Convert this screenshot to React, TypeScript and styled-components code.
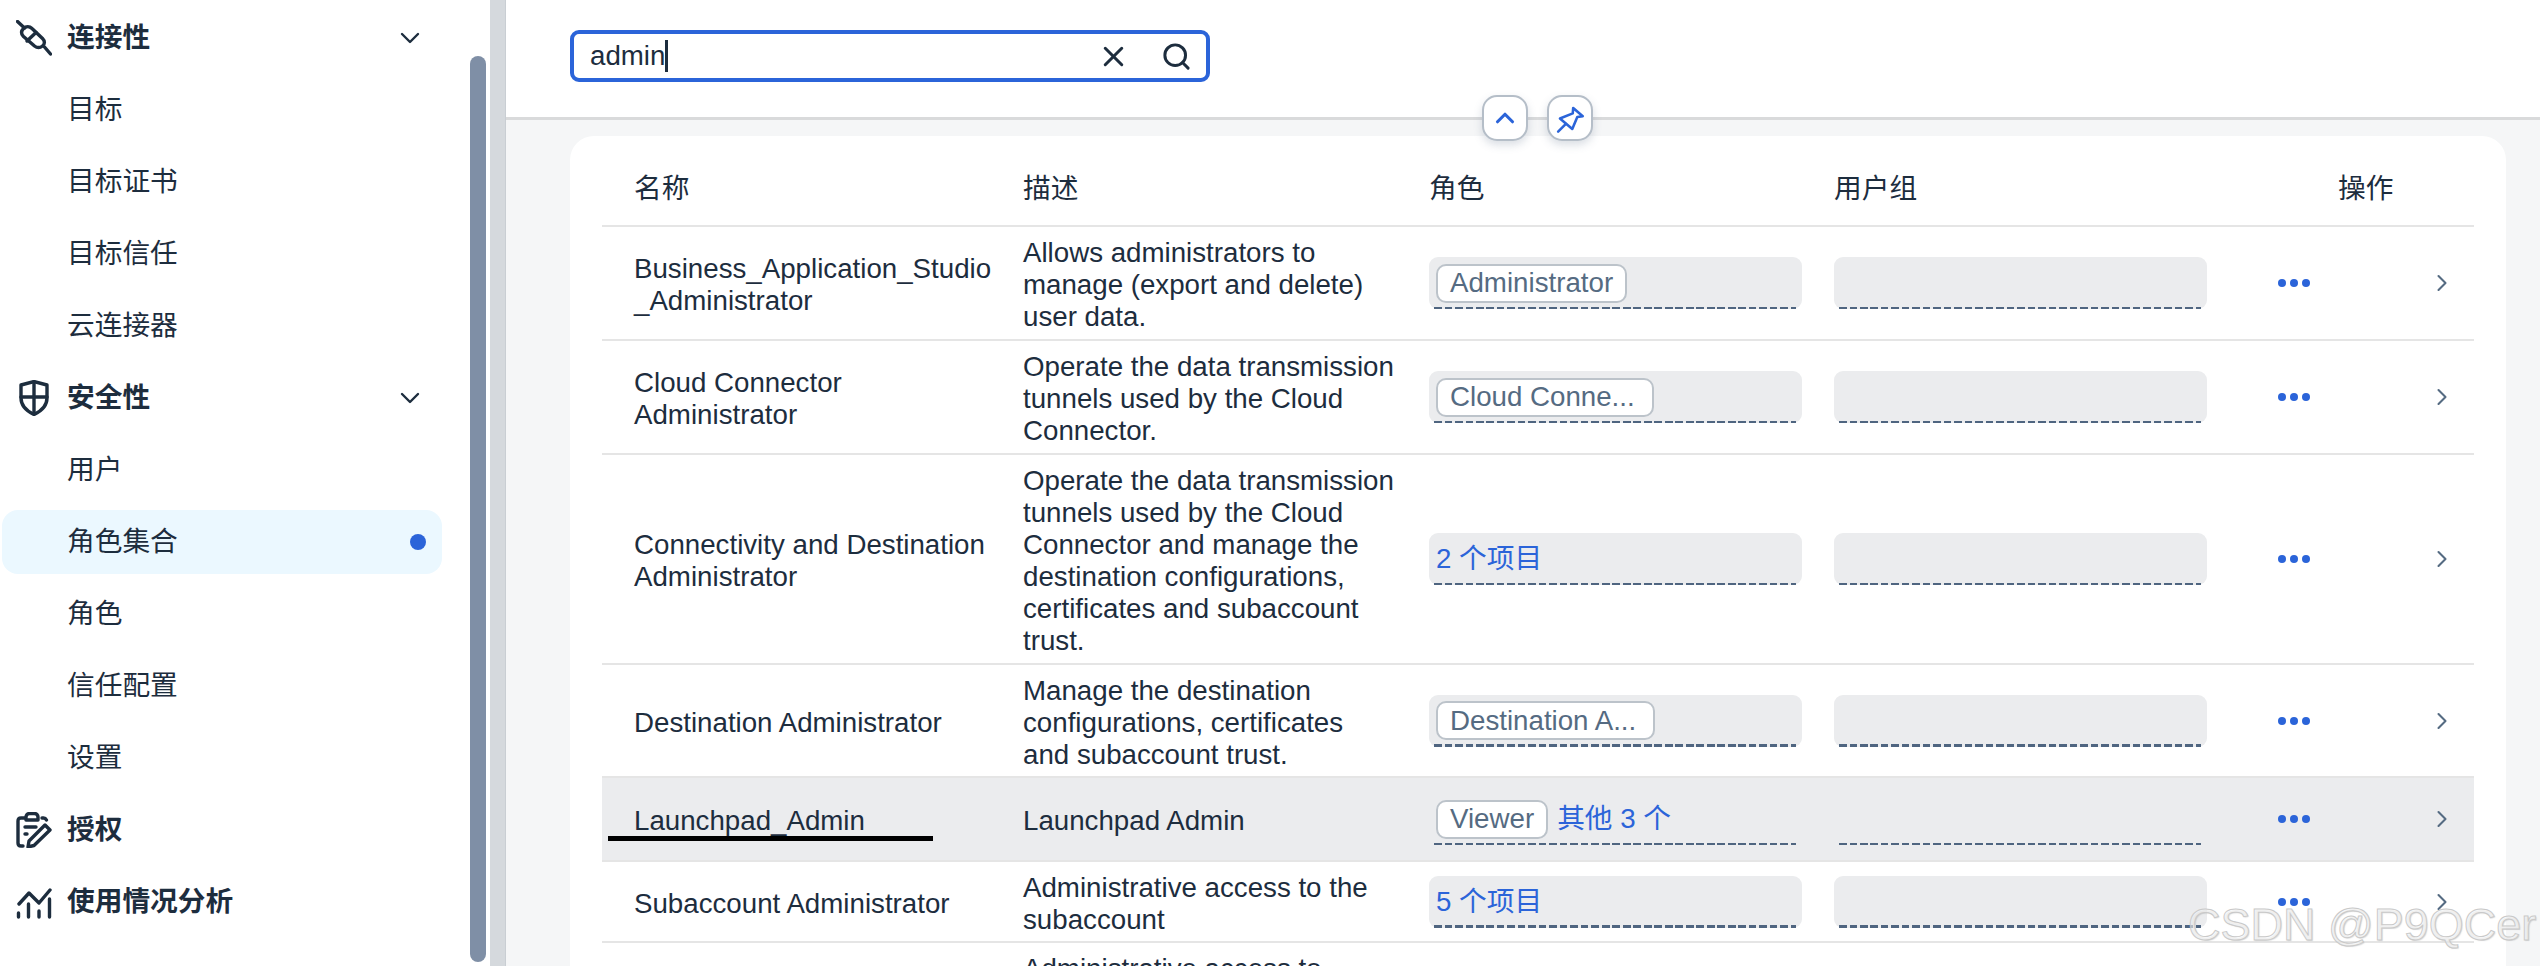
import { ChevronDown, ChevronRight, ChevronUp, Search, X } from "lucide-react";
import styled, { createGlobalStyle } from "styled-components";

const GlobalStyle = createGlobalStyle`
  html, body {
    margin: 0;
    padding: 0;
    background: #ffffff;
  }
  * {
    box-sizing: border-box;
  }
`;

const FONT = `"Liberation Sans", "Noto Sans CJK SC", sans-serif`;

type NavEntry = {
  label: string;
  icon?: "plug" | "shield" | "clipboard" | "chart";
  expanded?: boolean;
  active?: boolean;
};

const navItems: NavEntry[] = [
  { label: "连接性", icon: "plug", expanded: true },
  { label: "目标" },
  { label: "目标证书" },
  { label: "目标信任" },
  { label: "云连接器" },
  { label: "安全性", icon: "shield", expanded: true },
  { label: "用户" },
  { label: "角色集合", active: true },
  { label: "角色" },
  { label: "信任配置" },
  { label: "设置" },
  { label: "授权", icon: "clipboard" },
  { label: "使用情况分析", icon: "chart" },
];

type RowData = {
  name?: React.ReactNode;
  desc: string;
  tokens?: string[];
  more?: string;
  hovered?: boolean;
  cutOff?: boolean;
  trim?: boolean;
};

const rows: RowData[] = [
  {
    name: (
      <>
        Business_Application_Studio
        <wbr />
        _Administrator
      </>
    ),
    desc: "Allows administrators to manage (export and delete) user data.",
    tokens: ["Administrator"],
  },
  {
    name: "Cloud Connector Administrator",
    desc: "Operate the data transmission tunnels used by the Cloud Connector.",
    tokens: ["Cloud Conne..."],
  },
  {
    name: "Connectivity and Destination Administrator",
    desc: "Operate the data transmission tunnels used by the Cloud Connector and manage the destination configurations, certificates and subaccount trust.",
    more: "2 个项目",
  },
  {
    name: "Destination Administrator",
    desc: "Manage the destination configurations, certificates and subaccount trust.",
    tokens: ["Destination A..."],
    trim: true,
  },
  {
    name: "Launchpad_Admin",
    desc: "Launchpad Admin",
    tokens: ["Viewer"],
    more: "其他 3 个",
    hovered: true,
  },
  {
    name: "Subaccount Administrator",
    desc: "Administrative access to the subaccount",
    more: "5 个项目",
    trim: true,
  },
  {
    desc: "Administrative access to",
    cutOff: true,
  },
];

function NavIcon({ kind }: { kind: NonNullable<NavEntry["icon"]> }) {
  if (kind === "plug") {
    return (
      <IconSvg viewBox="0 0 36 36">
        <path d="M1.500 1.500l7 6.500M28.500 27l6 7" />
        <path d="M7.500 8.500c2.500-2.500 6-2.500 8.500 0l10.500 10c2.500 2.500 2.500 5.500 0 7.500-2.500 2-5.500 2-8 0L7.500 16.500c-2.500-2.500-2.500-5.500 0-8z" />
        <path d="M11 21l9-8.500" />
      </IconSvg>
    );
  }
  if (kind === "shield") {
    return (
      <IconSvg viewBox="0 0 36 36">
        <path d="M18 1.500l13 3.500v13c0 8-5.500 13-13 16.500C10.500 31 5 26 5 18V5z" />
        <path d="M18 2v32M5 17h26" />
      </IconSvg>
    );
  }
  if (kind === "clipboard") {
    return (
      <IconSvg viewBox="0 0 36 36">
        <path d="M9 6H5c-2 0-3 1-3 3v22c0 2 1 3 3 3h2" />
        <path d="M26 6h1.500c1.500 0 2.500 1 3 2" />
        <path d="M10 8V5c0-2 1.500-3.500 3.500-3.500h5C20.500 1.500 22 3 22 5v3z" />
        <path d="M9 15h11M9 22h2" />
        <path d="M29 13l5 5-16 15.500-6 1.500 1-6z" />
      </IconSvg>
    );
  }
  return (
    <IconSvg viewBox="0 0 36 36">
      <path d="M3 20L13 9l10 10 11-13" />
      <path d="M2.500 29v4M12.500 20v13M23 27v6M33.500 15v18" />
    </IconSvg>
  );
}

function PinIcon() {
  return (
    <svg width="46" height="46" viewBox="0 0 46 46" fill="none" stroke="#2b64d9" strokeWidth="2.800" strokeLinejoin="round" strokeLinecap="round">
      <path d="M12 23.500L26 18l.500-6L37 21l-6 1-5.500 13z" />
      <path d="M18.500 29.500L10 38" />
    </svg>
  );
}

function TableRow({ row }: { row: RowData }) {
  return (
    <Row $hovered={row.hovered} $cutOff={row.cutOff} $trim={row.trim}>
      <TextCell>{row.name}</TextCell>
      <DescCell>{row.desc}</DescCell>
      {!row.cutOff && (
        <>
          <Field $plain={row.hovered}>
            {row.tokens?.map((t) => (
              <Token key={t} $clipped={t.endsWith("...")}>
                {t}
              </Token>
            ))}
            {row.more && <MoreLink>{row.more}</MoreLink>}
          </Field>
          <Field $plain={row.hovered} />
          <ActionCell>
            <Dots>
              <Dot />
              <Dot />
              <Dot />
            </Dots>
          </ActionCell>
          <ArrowCell>
            <ChevronRight size={28} strokeWidth={1.800} color="#556b82" />
          </ArrowCell>
        </>
      )}
      {row.hovered && <Scribble />}
    </Row>
  );
}

export default function App() {
  return (
    <Page>
      <GlobalStyle />
      <Sidebar>
        <NavList>
          {navItems.map((item) => (
            <NavRow key={item.label} $active={item.active} $lead={!!item.icon}>
              {item.icon && (
                <IconSlot>
                  <NavIcon kind={item.icon} />
                </IconSlot>
              )}
              <NavLabel $lead={!!item.icon}>{item.label}</NavLabel>
              {item.expanded && (
                <NavChevron>
                  <ChevronDown size={32} strokeWidth={1.800} color="#1d2d3e" />
                </NavChevron>
              )}
              {item.active && <ActiveDot />}
            </NavRow>
          ))}
        </NavList>
        <ScrollThumb />
      </Sidebar>
      <Gutter />
      <Main>
        <FilterBar>
          <SearchBox>
            <SearchText>admin</SearchText>
            <Caret />
            <SearchIcons>
              <X size={33} strokeWidth={2.200} color="#1d2d3e" />
              <Search size={31} strokeWidth={2.300} color="#1d2d3e" />
            </SearchIcons>
          </SearchBox>
          <BarButtons>
            <BarButton>
              <ChevronUp size={30} strokeWidth={2.500} color="#2b64d9" />
            </BarButton>
            <BarButton>
              <PinIcon />
            </BarButton>
          </BarButtons>
        </FilterBar>
        <Card>
          <HeadRow>
            <HeadCell>名称</HeadCell>
            <HeadCell>描述</HeadCell>
            <HeadCell>角色</HeadCell>
            <HeadCell>用户组</HeadCell>
            <HeadAction>操作</HeadAction>
          </HeadRow>
          {rows.map((r, i) => (
            <TableRow key={i} row={r} />
          ))}
        </Card>
      </Main>
      <Watermark>CSDN @P9QCer</Watermark>
    </Page>
  );
}

const Page = styled.div`
  position: relative;
  display: flex;
  width: 2540px;
  height: 966px;
  overflow: hidden;
  font-family: ${FONT};
  font-size: 27.700px;
  line-height: 32px;
  color: #1d2d3e;
  background: #ffffff;
`;

const Sidebar = styled.aside`
  position: relative;
  flex: 0 0 490px;
  padding: 6px 0 0 2px;
  background: #ffffff;
`;

const NavList = styled.nav`
  display: flex;
  flex-direction: column;
  gap: 8px;
  width: 440px;
`;

const NavRow = styled.div<{ $active?: boolean; $lead?: boolean }>`
  display: flex;
  align-items: center;
  height: 64px;
  padding: 0 16px 0 ${(p) => (p.$lead ? "14px" : "65px")};
  border-radius: 16px;
  background: ${(p) => (p.$active ? "#ebf8ff" : "transparent")};
`;

const IconSlot = styled.span`
  display: flex;
  flex: 0 0 36px;
  margin-right: 15px;
`;

const IconSvg = styled.svg`
  width: 36px;
  height: 36px;
  fill: none;
  stroke: #1d2d3e;
  stroke-width: 3.400;
  stroke-linecap: round;
  stroke-linejoin: round;
`;

const NavLabel = styled.span<{ $lead?: boolean }>`
  font-weight: ${(p) => (p.$lead ? 700 : 400)};
`;

const NavChevron = styled.span`
  display: flex;
  margin-left: auto;
`;

const ActiveDot = styled.span`
  width: 16px;
  height: 16px;
  margin-left: auto;
  border-radius: 50%;
  background: #2b64d9;
`;

const ScrollThumb = styled.div`
  position: absolute;
  left: 470px;
  top: 56px;
  width: 16px;
  height: 906px;
  border-radius: 8px;
  background: #7f8fa6;
`;

const Gutter = styled.div`
  flex: 0 0 16px;
  background: #d5d9dd;
  border-right: 1px solid #c9ced3;
`;

const Main = styled.main`
  flex: 1;
  min-width: 0;
  background: #f5f6f7;
`;

const FilterBar = styled.div`
  position: relative;
  height: 120px;
  padding: 30px 0 0 64px;
  background: #ffffff;
  border-bottom: 3px solid #d9dadb;
`;

const SearchBox = styled.div`
  display: flex;
  align-items: center;
  width: 640px;
  height: 52px;
  padding: 0 14px 0 16px;
  border: 4px solid #2b64d9;
  border-radius: 9px;
  background: #ffffff;
`;

const SearchText = styled.span`
  color: #1d2d3e;
`;

const Caret = styled.span`
  width: 3px;
  height: 32px;
  background: #1d2d3e;
`;

const SearchIcons = styled.span`
  display: flex;
  align-items: center;
  gap: 31px;
  margin-left: auto;
`;

const BarButtons = styled.div`
  position: absolute;
  left: 976px;
  top: 95px;
  display: flex;
  gap: 19px;
`;

const BarButton = styled.span`
  display: flex;
  align-items: center;
  justify-content: center;
  width: 46px;
  height: 46px;
  border: 2px solid #b5bec8;
  border-radius: 15px;
  background: #ffffff;
  box-shadow: 0 4px 8px rgba(85, 107, 130, 0.22);
`;

const Card = styled.section`
  width: 1936px;
  margin: 16px 0 0 64px;
  padding: 0 32px;
  border-radius: 24px 24px 0 0;
  background: #ffffff;
`;

const COLUMNS = "389px 406px 405px 439px 137px 64px";

const HeadRow = styled.div`
  display: grid;
  grid-template-columns: ${COLUMNS};
  align-items: center;
  height: 91px;
  padding: 16px 0 0 32px;
  border-bottom: 2px solid #e5e5e5;
`;

const HeadCell = styled.div``;

const HeadAction = styled.div`
  padding-left: 65px;
  white-space: nowrap;
`;

const Row = styled.div<{ $hovered?: boolean; $cutOff?: boolean; $trim?: boolean }>`
  position: relative;
  display: grid;
  grid-template-columns: ${COLUMNS};
  align-items: ${(p) => (p.$cutOff ? "start" : "center")};
  min-height: ${(p) => (p.$hovered ? "84px" : "0")};
  padding: ${(p) => (p.$trim ? "5.500px" : "6px")} 0 ${(p) => (p.$trim ? "5.500px" : "6px")} 32px;
  border-bottom: ${(p) => (p.$cutOff ? "none" : "2px solid #e5e5e5")};
  background: ${(p) => (p.$hovered ? "#ebecee" : "transparent")};
`;

const TextCell = styled.div`
  padding: 4px 24px 0 0;
`;

const DescCell = styled.div`
  padding: 4px 33px 0 0;
`;

const Field = styled.div<{ $plain?: boolean }>`
  position: relative;
  display: flex;
  align-items: center;
  gap: 9px;
  width: 373px;
  height: 52px;
  padding: 0 7px;
  border-radius: 9px;
  background: ${(p) => (p.$plain ? "transparent" : "#ebecee")};
  white-space: nowrap;

  &::after {
    content: "";
    position: absolute;
    left: 5px;
    right: 6px;
    bottom: 0;
    height: 2.500px;
    background: repeating-linear-gradient(90deg, #4f6580 0 7.500px, transparent 7.500px 10.500px);
  }
`;

const Token = styled.span<{ $clipped?: boolean }>`
  display: inline-flex;
  align-items: center;
  height: 39px;
  padding: 0 ${(p) => (p.$clipped ? "17px" : "12px")} 0 12px;
  border: 2px solid #bcc3ca;
  border-radius: 10px;
  background: #ffffff;
  color: #556b82;
`;

const MoreLink = styled.span`
  color: #2b64d9;
`;

const ActionCell = styled.div`
  padding-left: 5px;
`;

const Dots = styled.span`
  display: flex;
  gap: 4px;
`;

const Dot = styled.span`
  width: 8px;
  height: 8px;
  border-radius: 50%;
  background: #2b64d9;
`;

const ArrowCell = styled.div`
  display: flex;
  padding-left: 18px;
`;

const Scribble = styled.span`
  position: absolute;
  left: 6px;
  top: 58px;
  width: 325px;
  height: 5px;
  background: #000000;
`;

const Watermark = styled.div`
  position: absolute;
  left: 2188px;
  top: 901px;
  font-family: "Liberation Sans", sans-serif;
  font-size: 45px;
  line-height: 48px;
  white-space: nowrap;
  color: rgba(255, 255, 255, 0.55);
  -webkit-text-stroke: 1px #c9c9c9;
  text-shadow: 1px 1px 1px rgba(120, 120, 120, 0.25);
`;
